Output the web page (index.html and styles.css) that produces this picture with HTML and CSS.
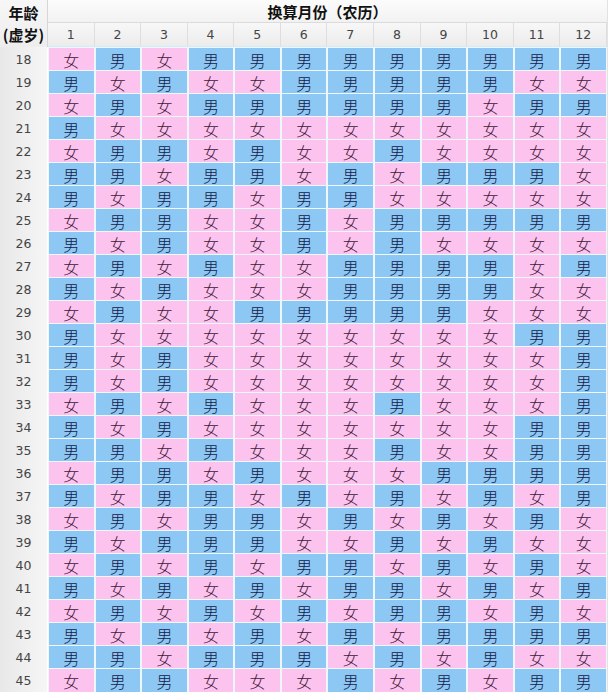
FILE: index.html
```html
<!DOCTYPE html>
<html lang="zh-CN">
<head>
<meta charset="utf-8">
<title>生男生女表</title>
<link rel="stylesheet" href="styles.css">
</head>
<body>
<div class="chart">
  <div class="head">
    <div class="corner"><span>年龄</span><span>(虚岁)</span></div>
    <div class="title">换算月份（农历）</div>
    <div class="num">1</div><div class="num">2</div><div class="num">3</div><div class="num">4</div><div class="num">5</div><div class="num">6</div><div class="num">7</div><div class="num">8</div><div class="num">9</div><div class="num">10</div><div class="num">11</div><div class="num">12</div>
  </div>
  <div class="row"><div class="age">18</div><div class="g">女</div><div class="b">男</div><div class="g">女</div><div class="b">男</div><div class="b">男</div><div class="b">男</div><div class="b">男</div><div class="b">男</div><div class="b">男</div><div class="b">男</div><div class="b">男</div><div class="b">男</div></div>
  <div class="row"><div class="age">19</div><div class="b">男</div><div class="g">女</div><div class="b">男</div><div class="g">女</div><div class="g">女</div><div class="b">男</div><div class="b">男</div><div class="b">男</div><div class="b">男</div><div class="b">男</div><div class="g">女</div><div class="g">女</div></div>
  <div class="row"><div class="age">20</div><div class="g">女</div><div class="b">男</div><div class="g">女</div><div class="b">男</div><div class="b">男</div><div class="b">男</div><div class="b">男</div><div class="b">男</div><div class="b">男</div><div class="g">女</div><div class="b">男</div><div class="b">男</div></div>
  <div class="row"><div class="age">21</div><div class="b">男</div><div class="g">女</div><div class="g">女</div><div class="g">女</div><div class="g">女</div><div class="g">女</div><div class="g">女</div><div class="g">女</div><div class="g">女</div><div class="g">女</div><div class="g">女</div><div class="g">女</div></div>
  <div class="row"><div class="age">22</div><div class="g">女</div><div class="b">男</div><div class="b">男</div><div class="g">女</div><div class="b">男</div><div class="g">女</div><div class="g">女</div><div class="b">男</div><div class="g">女</div><div class="g">女</div><div class="g">女</div><div class="g">女</div></div>
  <div class="row"><div class="age">23</div><div class="b">男</div><div class="b">男</div><div class="g">女</div><div class="b">男</div><div class="b">男</div><div class="g">女</div><div class="b">男</div><div class="g">女</div><div class="b">男</div><div class="b">男</div><div class="b">男</div><div class="g">女</div></div>
  <div class="row"><div class="age">24</div><div class="b">男</div><div class="g">女</div><div class="b">男</div><div class="b">男</div><div class="g">女</div><div class="b">男</div><div class="b">男</div><div class="g">女</div><div class="g">女</div><div class="g">女</div><div class="g">女</div><div class="g">女</div></div>
  <div class="row"><div class="age">25</div><div class="g">女</div><div class="b">男</div><div class="b">男</div><div class="g">女</div><div class="g">女</div><div class="b">男</div><div class="g">女</div><div class="b">男</div><div class="b">男</div><div class="b">男</div><div class="b">男</div><div class="b">男</div></div>
  <div class="row"><div class="age">26</div><div class="b">男</div><div class="g">女</div><div class="b">男</div><div class="g">女</div><div class="g">女</div><div class="b">男</div><div class="g">女</div><div class="b">男</div><div class="g">女</div><div class="g">女</div><div class="g">女</div><div class="g">女</div></div>
  <div class="row"><div class="age">27</div><div class="g">女</div><div class="b">男</div><div class="g">女</div><div class="b">男</div><div class="g">女</div><div class="g">女</div><div class="b">男</div><div class="b">男</div><div class="b">男</div><div class="b">男</div><div class="g">女</div><div class="b">男</div></div>
  <div class="row"><div class="age">28</div><div class="b">男</div><div class="g">女</div><div class="b">男</div><div class="g">女</div><div class="g">女</div><div class="g">女</div><div class="b">男</div><div class="b">男</div><div class="b">男</div><div class="b">男</div><div class="g">女</div><div class="g">女</div></div>
  <div class="row"><div class="age">29</div><div class="g">女</div><div class="b">男</div><div class="g">女</div><div class="g">女</div><div class="b">男</div><div class="b">男</div><div class="b">男</div><div class="b">男</div><div class="b">男</div><div class="g">女</div><div class="g">女</div><div class="g">女</div></div>
  <div class="row"><div class="age">30</div><div class="b">男</div><div class="g">女</div><div class="g">女</div><div class="g">女</div><div class="g">女</div><div class="g">女</div><div class="g">女</div><div class="g">女</div><div class="g">女</div><div class="g">女</div><div class="b">男</div><div class="b">男</div></div>
  <div class="row"><div class="age">31</div><div class="b">男</div><div class="g">女</div><div class="b">男</div><div class="g">女</div><div class="g">女</div><div class="g">女</div><div class="g">女</div><div class="g">女</div><div class="g">女</div><div class="g">女</div><div class="g">女</div><div class="b">男</div></div>
  <div class="row"><div class="age">32</div><div class="b">男</div><div class="g">女</div><div class="b">男</div><div class="g">女</div><div class="g">女</div><div class="g">女</div><div class="g">女</div><div class="g">女</div><div class="g">女</div><div class="g">女</div><div class="g">女</div><div class="b">男</div></div>
  <div class="row"><div class="age">33</div><div class="g">女</div><div class="b">男</div><div class="g">女</div><div class="b">男</div><div class="g">女</div><div class="g">女</div><div class="g">女</div><div class="b">男</div><div class="g">女</div><div class="g">女</div><div class="g">女</div><div class="b">男</div></div>
  <div class="row"><div class="age">34</div><div class="b">男</div><div class="g">女</div><div class="b">男</div><div class="g">女</div><div class="g">女</div><div class="g">女</div><div class="g">女</div><div class="g">女</div><div class="g">女</div><div class="g">女</div><div class="b">男</div><div class="b">男</div></div>
  <div class="row"><div class="age">35</div><div class="b">男</div><div class="b">男</div><div class="g">女</div><div class="b">男</div><div class="g">女</div><div class="g">女</div><div class="g">女</div><div class="b">男</div><div class="g">女</div><div class="g">女</div><div class="b">男</div><div class="b">男</div></div>
  <div class="row"><div class="age">36</div><div class="g">女</div><div class="b">男</div><div class="b">男</div><div class="g">女</div><div class="b">男</div><div class="g">女</div><div class="g">女</div><div class="g">女</div><div class="b">男</div><div class="b">男</div><div class="b">男</div><div class="b">男</div></div>
  <div class="row"><div class="age">37</div><div class="b">男</div><div class="g">女</div><div class="b">男</div><div class="b">男</div><div class="g">女</div><div class="b">男</div><div class="g">女</div><div class="b">男</div><div class="g">女</div><div class="b">男</div><div class="g">女</div><div class="b">男</div></div>
  <div class="row"><div class="age">38</div><div class="g">女</div><div class="b">男</div><div class="g">女</div><div class="b">男</div><div class="b">男</div><div class="g">女</div><div class="b">男</div><div class="g">女</div><div class="b">男</div><div class="g">女</div><div class="b">男</div><div class="g">女</div></div>
  <div class="row"><div class="age">39</div><div class="b">男</div><div class="g">女</div><div class="b">男</div><div class="b">男</div><div class="b">男</div><div class="g">女</div><div class="g">女</div><div class="b">男</div><div class="g">女</div><div class="b">男</div><div class="g">女</div><div class="g">女</div></div>
  <div class="row"><div class="age">40</div><div class="g">女</div><div class="b">男</div><div class="g">女</div><div class="b">男</div><div class="g">女</div><div class="b">男</div><div class="b">男</div><div class="g">女</div><div class="b">男</div><div class="g">女</div><div class="b">男</div><div class="g">女</div></div>
  <div class="row"><div class="age">41</div><div class="b">男</div><div class="g">女</div><div class="b">男</div><div class="g">女</div><div class="b">男</div><div class="g">女</div><div class="b">男</div><div class="b">男</div><div class="g">女</div><div class="b">男</div><div class="g">女</div><div class="b">男</div></div>
  <div class="row"><div class="age">42</div><div class="g">女</div><div class="b">男</div><div class="g">女</div><div class="b">男</div><div class="g">女</div><div class="b">男</div><div class="g">女</div><div class="b">男</div><div class="b">男</div><div class="g">女</div><div class="b">男</div><div class="g">女</div></div>
  <div class="row"><div class="age">43</div><div class="b">男</div><div class="g">女</div><div class="b">男</div><div class="g">女</div><div class="b">男</div><div class="g">女</div><div class="b">男</div><div class="g">女</div><div class="b">男</div><div class="b">男</div><div class="b">男</div><div class="b">男</div></div>
  <div class="row"><div class="age">44</div><div class="b">男</div><div class="b">男</div><div class="g">女</div><div class="b">男</div><div class="b">男</div><div class="b">男</div><div class="g">女</div><div class="b">男</div><div class="g">女</div><div class="b">男</div><div class="g">女</div><div class="g">女</div></div>
  <div class="row"><div class="age">45</div><div class="g">女</div><div class="b">男</div><div class="b">男</div><div class="g">女</div><div class="g">女</div><div class="g">女</div><div class="b">男</div><div class="g">女</div><div class="b">男</div><div class="g">女</div><div class="b">男</div><div class="b">男</div></div>
</div>
</body>
</html>
```

FILE: styles.css
```css
html, body {
  margin: 0;
  padding: 0;
  background: #ffffff;
}

body {
  font-family: "Noto Sans CJK SC", "Noto Sans", sans-serif;
}

.chart {
  width: 607px;
  border-right: 1px solid #e3e3e3;
  border-bottom: 1px solid #e6e6e6;
}

.head {
  display: grid;
  grid-template-columns: 48px repeat(12, 1fr);
  grid-template-rows: 23px 24px;
}

.corner {
  grid-row: 1 / 3;
  display: flex;
  flex-direction: column;
  align-items: center;
  justify-content: center;
  font-size: 15px;
  font-weight: 700;
  line-height: 22px;
  color: #111;
  background: linear-gradient(to bottom, #f7f7f7, #ededed);
  border-right: 1px solid #d6d6d6;
}

.title {
  grid-column: 2 / 14;
  display: flex;
  align-items: center;
  justify-content: center;
  font-size: 15px;
  font-weight: 700;
  color: #111;
  background: linear-gradient(to bottom, #fcfcfc, #f2f2f2);
  border-bottom: 1px solid #dcdcdc;
}

.num {
  display: flex;
  align-items: center;
  justify-content: center;
  font-family: "DejaVu Sans", "Liberation Sans", sans-serif;
  font-size: 12.5px;
  color: #444;
  background: linear-gradient(to bottom, #f7f7f7, #ececec);
  border-right: 1px solid #dedede;
  border-bottom: 1px solid #d4ecf7;
}

.row {
  display: grid;
  grid-template-columns: 48px repeat(12, 1fr);
  height: 23px;
}

.age {
  display: flex;
  align-items: center;
  justify-content: center;
  font-family: "DejaVu Sans", "Liberation Sans", sans-serif;
  font-size: 12.5px;
  color: #444;
  background: linear-gradient(to right, #e8e8e8, #f6f6f6);
  border-bottom: 1px solid #c4c4c4;
  border-right: 1px solid #ffffff;
}

.b,
.g {
  display: flex;
  align-items: center;
  justify-content: center;
  font-size: 16px;
  font-weight: 300;
  border: 1px solid #eef8fc;
}

.b {
  background: #8dc7f4;
  color: #141a48;
}

.g {
  background: #fcc3ef;
  color: #3e1838;
}
```
